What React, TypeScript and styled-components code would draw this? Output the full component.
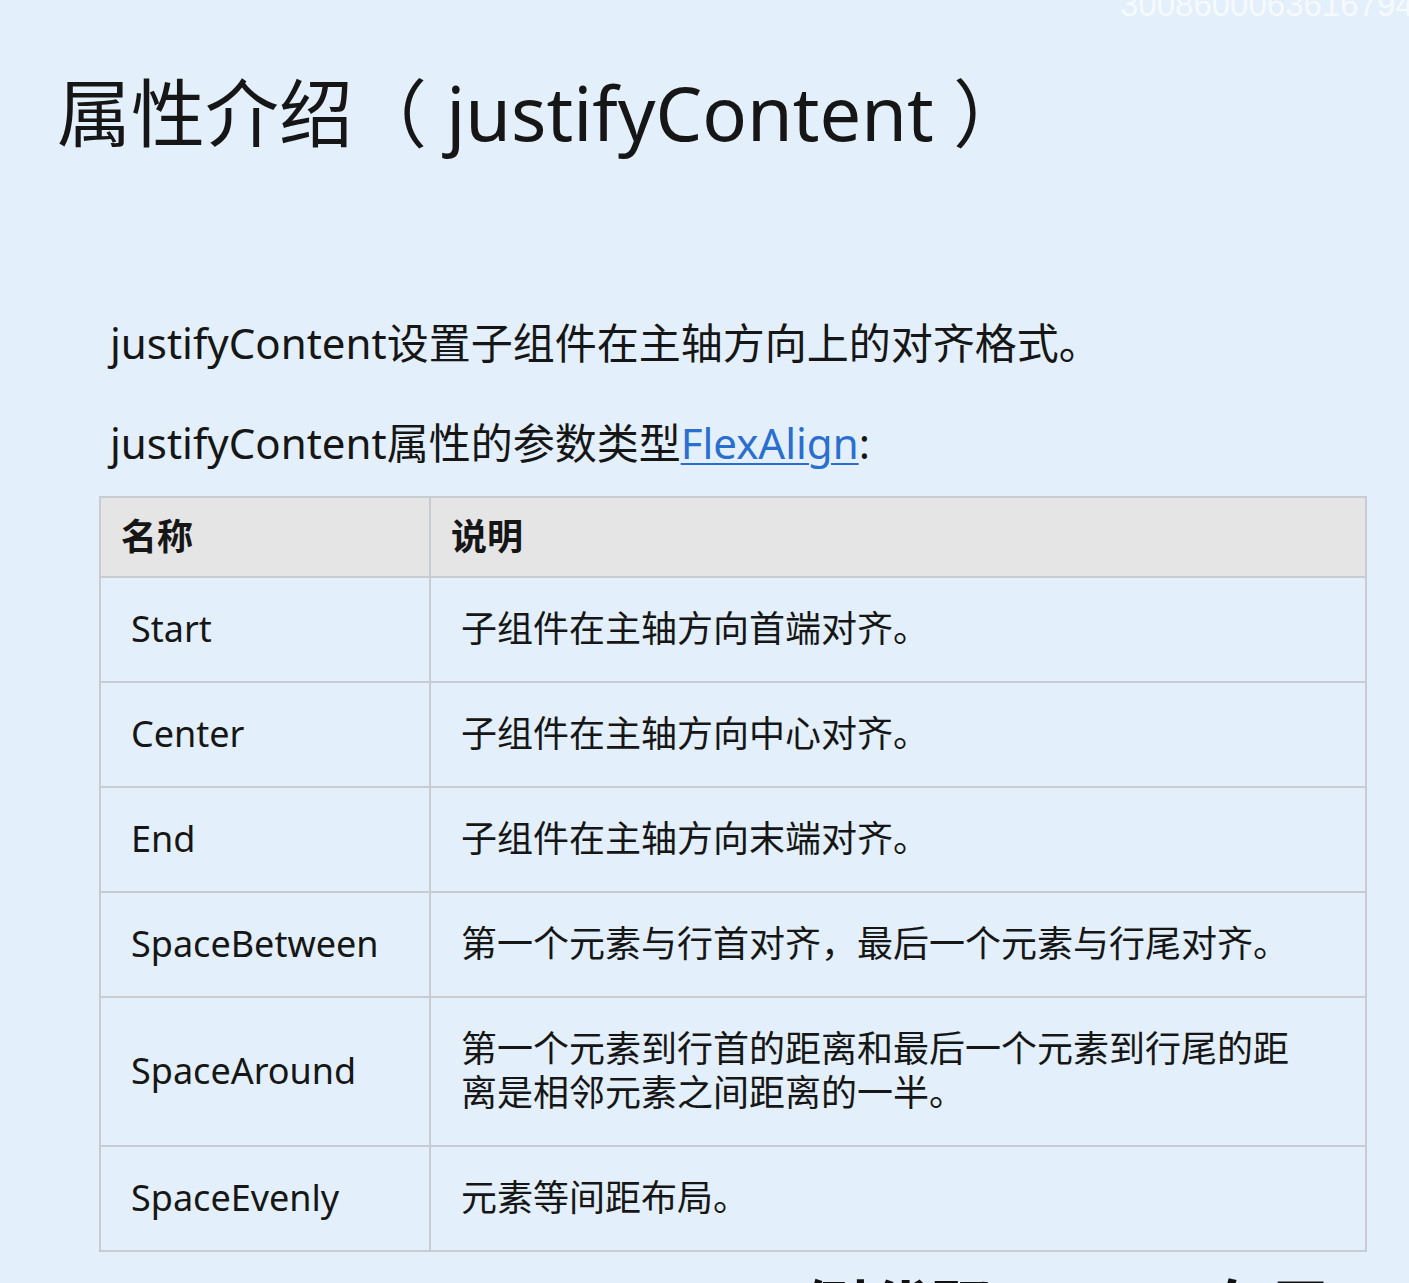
import * as React from 'react';
import styled, { createGlobalStyle } from 'styled-components';

const GlobalStyle = createGlobalStyle`
    html, body {
        margin: 0;
        padding: 0;
        background: #e3effa;
    }
    body {
        font-family: 'Noto Sans', 'Noto Sans CJK SC', sans-serif;
        color: #161616;
    }
`;

const Slide = styled.div`
    position: relative;
    width: 1409px;
    height: 1283px;
    overflow: hidden;
    box-sizing: border-box;
    padding: 63px 0 0 57px;
    background: #e3effa;
`;

const Watermark = styled.div`
    position: absolute;
    top: -14px;
    left: 1120px;
    font-family: 'Liberation Sans', sans-serif;
    font-size: 33px;
    color: rgba(255, 255, 255, 0.7);
    white-space: nowrap;
`;

const Title = styled.h1`
    margin: 0;
    font-size: 74px;
    line-height: 100px;
    font-weight: 400;
    white-space: nowrap;
`;

const Body = styled.div`
    display: flex;
    flex-direction: column;
    margin-top: 150px;
    margin-left: 42px;
`;

const Paragraph = styled.p`
    margin: 0 0 40px 11px;
    font-size: 42px;
    line-height: 60px;
    white-space: nowrap;
    &:nth-of-type(2) {
        margin-bottom: 23px;
    }
`;

const Link = styled.a`
    color: #2a6fd0;
    text-decoration: underline;
    text-decoration-thickness: 2px;
    text-underline-offset: 4px;
`;

const Table = styled.table`
    width: 1268px;
    border-collapse: collapse;
    font-size: 36px;
    table-layout: fixed;
`;

const HeadCell = styled.th<{ $width?: number }>`
    box-sizing: border-box;
    width: ${({ $width }) => ($width ? `${$width}px` : 'auto')};
    padding: 17px 20px;
    line-height: 44px;
    text-align: left;
    font-weight: 700;
    background: #e5e5e6;
    border: 2px solid #c8ccd1;
`;

const Cell = styled.td`
    padding: 29px 60px 30px 30px;
    line-height: 44px;
    vertical-align: middle;
    border: 2px solid #c8ccd1;
    background: #e3effa;
`;

const NextTitle = styled.div`
    margin: 25px 0 0 683px;
    font-size: 64px;
    font-weight: 700;
    line-height: 64px;
    white-space: nowrap;
    color: #111;
`;

const rows: [string, string][] = [
    ['Start', '子组件在主轴方向首端对齐。'],
    ['Center', '子组件在主轴方向中心对齐。'],
    ['End', '子组件在主轴方向末端对齐。'],
    ['SpaceBetween', '第一个元素与行首对齐，最后一个元素与行尾对齐。'],
    ['SpaceAround', '第一个元素到行首的距离和最后一个元素到行尾的距离是相邻元素之间距离的一半。'],
    ['SpaceEvenly', '元素等间距布局。'],
];

export default function App() {
    return (
        <>
            <GlobalStyle />
            <Slide>
                <Watermark>300860006361679481</Watermark>
                <Title>属性介绍（ justifyContent ）</Title>
                <Body>
                    <Paragraph>justifyContent设置子组件在主轴方向上的对齐格式。</Paragraph>
                    <Paragraph>
                        justifyContent属性的参数类型<Link>FlexAlign</Link>:
                    </Paragraph>
                    <Table>
                        <thead>
                            <tr>
                                <HeadCell $width={330}>名称</HeadCell>
                                <HeadCell>说明</HeadCell>
                            </tr>
                        </thead>
                        <tbody>
                            {rows.map(([name, desc]) => (
                                <tr key={name}>
                                    <Cell>{name}</Cell>
                                    <Cell>{desc}</Cell>
                                </tr>
                            ))}
                        </tbody>
                    </Table>
                </Body>
                <NextTitle>示例代码：Flex 布局</NextTitle>
            </Slide>
        </>
    );
}
